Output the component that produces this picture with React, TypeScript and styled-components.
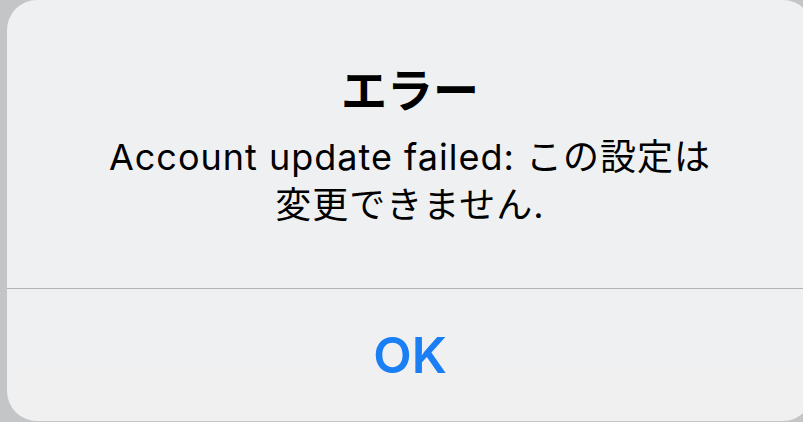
import styled, { createGlobalStyle } from "styled-components"

const Global = createGlobalStyle`
  html, body {
    margin: 0;
    padding: 0;
    width: 803px;
    height: 422px;
    overflow: hidden;
    background: #c4c5c6;
  }
`

const Backdrop = styled.div`
  display: flex;
  height: 422px;
  padding-left: 7px;
  box-sizing: border-box;
`

const Alert = styled.div`
  flex: none;
  width: 806px;
  height: 421px;
  border-radius: 30px;
  background: linear-gradient(180deg, #eef0f2 0%, #f0f0f1 100%);
  display: flex;
  flex-direction: column;
`

const Body = styled.div`
  height: 289px;
  display: flex;
  flex-direction: column;
  align-items: center;
  padding-top: 61px;
  box-sizing: border-box;
  border-bottom: 1.5px solid #b2b3b5;
  font-family: Inter, "Noto Sans CJK JP", sans-serif;
  color: #000;
`

const Title = styled.h2`
  margin: 0;
  font-size: 46px;
  line-height: 52px;
  font-weight: 700;
  font-family: "Noto Sans CJK JP", sans-serif;
`

const Message = styled.p`
  margin: 20px 0 0;
  font-size: 36px;
  line-height: 48px;
  font-weight: 400;
  text-align: center;
  letter-spacing: 1px;
`

const Action = styled.button`
  flex: 1;
  border: none;
  background: transparent;
  color: #1a7ef5;
  font-family: Inter, "Noto Sans", sans-serif;
  font-size: 50px;
  font-weight: 600;
  padding: 0;
`

export default function App() {
  return (
    <>
      <Global />
      <Backdrop>
        <Alert>
          <Body>
            <Title>エラー</Title>
            <Message>
              Account update failed: この設定は
              <br />
              変更できません.
            </Message>
          </Body>
          <Action>OK</Action>
        </Alert>
      </Backdrop>
    </>
  )
}
